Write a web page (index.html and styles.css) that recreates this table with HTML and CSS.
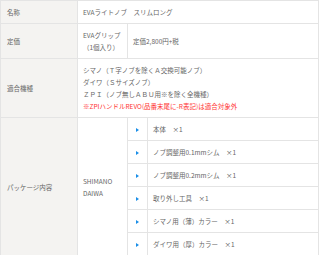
FILE: index.html
```html
<!DOCTYPE html>
<html lang="ja">
<head>
    <meta charset="UTF-8">
    <meta name="viewport" content="width=device-width, initial-scale=1.0">
    <title>EVAライトノブ　スリムロング</title>
    <link rel="stylesheet" href="styles.css">
</head>
<body>
    <table class="spec-table">
        <colgroup>
            <col class="col-head">
            <col class="col-sub">
            <col class="col-mark">
            <col>
        </colgroup>
        <tr class="row-name">
            <th>名称</th>
            <td colspan="3">EVAライトノブ　スリムロング</td>
        </tr>
        <tr class="row-price">
            <th>定価</th>
            <td>EVAグリップ<br>（1個入り）</td>
            <td colspan="2">定価2,800円+税</td>
        </tr>
        <tr class="row-fit">
            <th>適合機種</th>
            <td colspan="3">
                シマノ（Ｔ字ノブを除くＡ交換可能ノブ）<br>
                ダイワ（Ｓサイズノブ）<br>
                ＺＰＩ（ノブ無しＡＢＵ用※を除く全機種）<br>
                <span class="note">※ZPIハンドルREVO(品番末尾に-R表記)は適合対象外</span>
            </td>
        </tr>
        <tr class="row-item">
            <th rowspan="6">パッケージ内容</th>
            <td rowspan="6">SHIMANO<br>DAIWA</td>
            <td class="mark"><span class="arrow"></span></td>
            <td>本体　×1</td>
        </tr>
        <tr class="row-item">
            <td class="mark"><span class="arrow"></span></td>
            <td>ノブ調整用0.1mmシム　×1</td>
        </tr>
        <tr class="row-item">
            <td class="mark"><span class="arrow"></span></td>
            <td>ノブ調整用0.2mmシム　×1</td>
        </tr>
        <tr class="row-item">
            <td class="mark"><span class="arrow"></span></td>
            <td>取り外し工具　×1</td>
        </tr>
        <tr class="row-item">
            <td class="mark"><span class="arrow"></span></td>
            <td>シマノ用（薄）カラー　×1</td>
        </tr>
        <tr class="row-item">
            <td class="mark"><span class="arrow"></span></td>
            <td>ダイワ用（厚）カラー　×1</td>
        </tr>
    </table>
</body>
</html>
```

FILE: styles.css
```css
body {
    margin: 0;
    padding: 0;
    background-color: #fff;
    font-family: "Noto Sans CJK JP", "Noto Sans", sans-serif;
    font-size: 6.5px;
    color: #666;
}

.spec-table {
    width: 319px;
    border-collapse: collapse;
    table-layout: fixed;
}

.col-head {
    width: 77px;
}

.col-sub {
    width: 50px;
}

.col-mark {
    width: 20px;
}

.spec-table th,
.spec-table td {
    border: 1px solid #e4e4e4;
    padding: 0 5px;
    line-height: 12px;
    text-align: left;
    vertical-align: middle;
    font-weight: normal;
    white-space: nowrap;
}

.spec-table th {
    background-color: #f4f3f1;
    padding-left: 6px;
}

.row-name {
    height: 23px;
}

.row-price {
    height: 35px;
}

.row-fit {
    height: 59px;
}

.row-item {
    height: 23px;
}

.note {
    color: #f33;
}

.spec-table td.mark {
    padding: 0;
    text-align: center;
}

.arrow {
    display: inline-block;
    width: 0;
    height: 0;
    border-left: 3px solid #1a8ee8;
    border-top: 2px solid transparent;
    border-bottom: 2px solid transparent;
    vertical-align: middle;
}
```
